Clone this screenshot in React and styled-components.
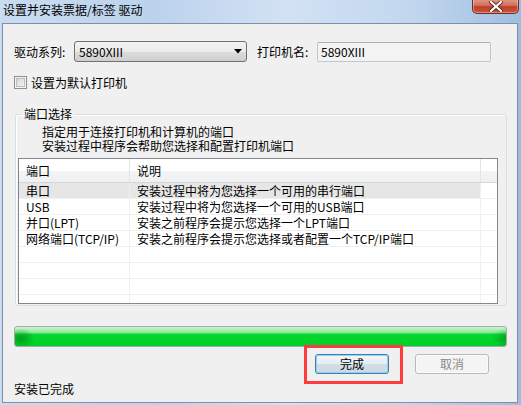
import React from 'react';
import styled, { createGlobalStyle } from 'styled-components';

const GlobalStyle = createGlobalStyle`
  html, body {
    margin: 0;
    padding: 0;
    background: #c3d7ee;
  }
  body {
    font-family: "Noto Sans CJK SC", "Liberation Sans", sans-serif;
    font-size: 12px;
    color: #000;
  }
`;

const Frame = styled.div`
  width: 521px;
  height: 405px;
  box-sizing: border-box;
  padding: 0 3px 2px 2px;
  display: flex;
  flex-direction: column;
  background: linear-gradient(90deg, #c9dcf1 0%, #bcd2ec 30%, #d2e2f4 55%, #c1d6ee 80%, #9fbde0 100%);
  overflow: hidden;
`;

const TitleBar = styled.div`
  height: 23px;
  display: flex;
  justify-content: space-between;
  align-items: flex-start;
`;

const Title = styled.div`
  padding: 3px 0 0 1px;
  line-height: 14px;
  white-space: nowrap;
`;

const CloseButton = styled.div`
  width: 47px;
  height: 15px;
  margin-top: -1px;
  margin-right: -1px;
  box-sizing: border-box;
  border: 1px solid #6d2f25;
  border-top: none;
  border-radius: 0 0 5px 5px;
  background: linear-gradient(180deg, #e19b8c 0%, #d3705c 45%, #c0412a 55%, #c9523a 100%);
  box-shadow: inset 0 0 0 1px rgba(255, 255, 255, 0.35);
  display: flex;
  align-items: center;
  justify-content: center;
`;

const Client = styled.div`
  flex: 1;
  box-sizing: border-box;
  border: 1px solid #7f90a4;
  background: #f0f0f0;
  padding: 17px 0 0 11px;
  display: flex;
  flex-direction: column;
`;

const FieldRow = styled.div`
  display: flex;
  align-items: center;
  height: 21px;
`;

const Label = styled.span`
  width: 60px;
  margin-left: ${p => p.$offset || 0}px;
  white-space: nowrap;
`;

const Combo = styled.div`
  width: 173px;
  height: 21px;
  box-sizing: border-box;
  border: 1px solid #707070;
  border-radius: 3px;
  background: linear-gradient(180deg, #f2f2f2 0%, #ebebeb 50%, #dddddd 51%, #cfcfcf 100%);
  display: flex;
  align-items: center;
  justify-content: space-between;
  padding: 0 4px 0 4px;
`;

const TextBox = styled.div`
  width: 174px;
  height: 20px;
  box-sizing: border-box;
  border: 1px solid #c3c6cb;
  border-top-color: #abadb3;
  border-radius: 2px;
  background: #f3f3f3;
  padding: 0 3px;
  display: flex;
  align-items: center;
`;

const CheckRow = styled.label`
  display: flex;
  align-items: center;
  gap: 4px;
  height: 14px;
  margin-top: 13px;
`;

const CheckBox = styled.span`
  width: 13px;
  height: 13px;
  box-sizing: border-box;
  border: 1px solid #8e8f8f;
  background: linear-gradient(135deg, #cfcfcf 0%, #e9e9e9 60%, #f6f6f6 100%);
  box-shadow: inset 0 0 0 1px #f4f4f4, inset 0 0 0 2px #bdbdbd;
`;

const Group = styled.fieldset`
  width: 492px;
  height: 199px;
  box-sizing: border-box;
  margin: 18px 0 0 1px;
  padding: 0 0 0 2px;
  border: 1px solid #d5dfe5;
  border-radius: 3px;
  box-shadow: inset 1px 1px 0 #fff;
`;

const Legend = styled.legend`
  padding: 0 2px;
  margin-left: 4px;
  line-height: 14px;
`;

const Hint = styled.div`
  margin: 4px 0 0 24px;
  line-height: 14px;
`;

const ListView = styled.div`
  width: 480px;
  height: 146px;
  box-sizing: border-box;
  margin-top: 5px;
  border: 1px solid #828790;
  background: #fff;
  overflow: hidden;
`;

const cols = '111px 351px 1fr';

const HeaderRow = styled.div`
  display: grid;
  grid-template-columns: ${cols};
  height: 23px;
  background: linear-gradient(180deg, #ffffff 0%, #ffffff 50%, #f3f4f6 51%, #eef0f2 100%);
  border-bottom: 1px solid #d5d5d5;
`;

const HeaderCell = styled.div`
  padding-left: 7px;
  display: flex;
  align-items: center;
  border-right: 1px solid #e3e4e6;
`;

const Row = styled.div`
  display: grid;
  grid-template-columns: ${cols};
  height: 16px;
  box-sizing: border-box;
  border-bottom: 1px solid #f0f0f0;
`;

const Cell = styled.div`
  padding-left: 7px;
  line-height: 15px;
  white-space: nowrap;
  border-right: 1px solid #f0f0f0;
  background: ${p => (p.$selected ? '#e6e6e6' : 'transparent')};
`;

const Filler = styled.div`
  border-right: none;
`;

const Progress = styled.div`
  width: 493px;
  height: 21px;
  box-sizing: border-box;
  margin-top: 20px;
  border: 1px solid #a8a8a8;
  border-radius: 3px;
  overflow: hidden;
  background:
    radial-gradient(ellipse 14px 10px at 6px 60%, rgba(0, 120, 20, 0.6), rgba(0, 120, 20, 0) 100%),
    radial-gradient(ellipse 14px 10px at 100% 60%, rgba(0, 120, 20, 0.5), rgba(0, 120, 20, 0) 100%),
    linear-gradient(180deg, #c9f7cd 0%, #8de89a 28%, #05d62e 40%, #00d12a 100%);
`;

const ButtonRow = styled.div`
  display: flex;
  justify-content: flex-end;
  gap: 26px;
  padding-right: 28px;
  margin-top: 7px;
`;

const Marked = styled.div`
  position: relative;
`;

const Highlight = styled.div`
  position: absolute;
  left: -11px;
  top: -9px;
  width: 99px;
  height: 39px;
  box-sizing: border-box;
  border: 3px solid #fd3d3d;
  pointer-events: none;
`;

const Button = styled.button`
  width: 74px;
  height: 20px;
  box-sizing: border-box;
  border-radius: 3px;
  font: inherit;
  padding: 0;
  line-height: 16px;
  border: 1px solid ${p => (p.$primary ? '#3c7fb1' : '#b5b9bc')};
  color: ${p => (p.disabled ? '#8a8a8a' : '#000')};
  background: ${p =>
    p.$primary
      ? 'linear-gradient(180deg, #f2f6f9 0%, #e6edf2 50%, #d3dde5 51%, #cdd8e1 100%)'
      : '#f4f4f4'};
  box-shadow: ${p => (p.$primary ? 'inset 0 0 0 1px #8fd4f5' : 'inset 0 0 0 1px #fbfbfb')};
`;

const Status = styled.div`
  margin-top: 8px;
  line-height: 14px;
`;

const ports = [
  ['串口', '安装过程中将为您选择一个可用的串行端口'],
  ['USB', '安装过程中将为您选择一个可用的USB端口'],
  ['并口(LPT)', '安装之前程序会提示您选择一个LPT端口'],
  ['网络端口(TCP/IP)', '安装之前程序会提示您选择或者配置一个TCP/IP端口'],
  ['', ''],
  ['', ''],
  ['', ''],
  ['', ''],
];

const App = () => {
  return (
    <>
      <GlobalStyle />
      <Frame>
        <TitleBar>
          <Title>设置并安装票据/标签 驱动</Title>
          <CloseButton>
            <svg width="14" height="11" viewBox="0 0 14 11">
              <path d="M2 1 L12 10 M12 1 L2 10" stroke="#5a2a22" strokeWidth="4" strokeLinecap="square" />
              <path d="M2 1 L12 10 M12 1 L2 10" stroke="#fff" strokeWidth="2.2" strokeLinecap="square" />
            </svg>
          </CloseButton>
        </TitleBar>
        <Client>
          <FieldRow>
            <Label>驱动系列:</Label>
            <Combo>
              <span>5890XIII</span>
              <svg width="8" height="5" viewBox="0 0 8 5">
                <path d="M0 0 H8 L4 4.5 Z" fill="#000" />
              </svg>
            </Combo>
            <Label $offset={10}>打印机名:</Label>
            <TextBox>5890XIII</TextBox>
          </FieldRow>
          <CheckRow>
            <CheckBox />
            <span>设置为默认打印机</span>
          </CheckRow>
          <Group>
            <Legend>端口选择</Legend>
            <Hint>
              指定用于连接打印机和计算机的端口
              <br />
              安装过程中程序会帮助您选择和配置打印机端口
            </Hint>
            <ListView>
              <HeaderRow>
                <HeaderCell>端口</HeaderCell>
                <HeaderCell>说明</HeaderCell>
                <Filler />
              </HeaderRow>
              {ports.map(([port, desc], i) => (
                <Row key={i}>
                  <Cell $selected={i === 0}>{port}</Cell>
                  <Cell $selected={i === 0}>{desc}</Cell>
                  <Filler />
                </Row>
              ))}
            </ListView>
          </Group>
          <Progress />
          <ButtonRow>
            <Marked>
              <Button $primary>完成</Button>
              <Highlight />
            </Marked>
            <Button disabled>取消</Button>
          </ButtonRow>
          <Status>安装已完成</Status>
        </Client>
      </Frame>
    </>
  );
};

export default App;
